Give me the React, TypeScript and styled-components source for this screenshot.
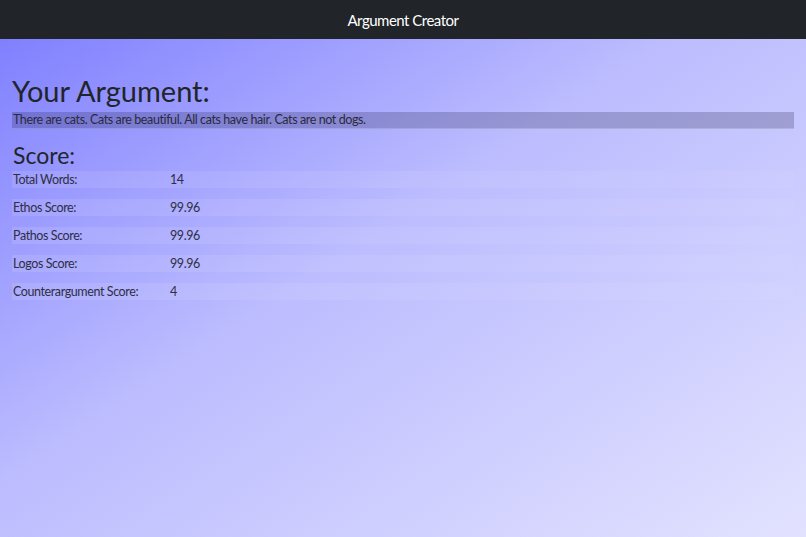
import React from 'react';
import styled, {createGlobalStyle} from 'styled-components';

const GlobalStyle = createGlobalStyle`
  html, body {
    margin: 0;
    padding: 0;
    height: 100%;
  }
  body {
    font-family: Lato, "Noto Sans", sans-serif;
    color: #212529;
  }
  #root {
    min-height: 100%;
  }
`

interface ScoreItem {
  label: string,
  value: string
}

const scores: ScoreItem[] = [
  {label: "Total Words:", value: "14"},
  {label: "Ethos Score:", value: "99.96"},
  {label: "Pathos Score:", value: "99.96"},
  {label: "Logos Score:", value: "99.96"},
  {label: "Counterargument Score:", value: "4"},
]

export default function App() {
  return (
    <Page>
      <GlobalStyle/>
      <NavBar>
        <Brand>Argument Creator</Brand>
      </NavBar>
      <Content>
        <Title>Your Argument:</Title>
        <ArgumentText>
          There are cats. Cats are beautiful. All cats have hair. Cats are not dogs.
        </ArgumentText>
        <SubTitle>Score:</SubTitle>
        <ScoreList>
          {scores.map((s) => (
            <ScoreRow key={s.label}>
              <Label>{s.label}</Label>
              <Value>{s.value}</Value>
            </ScoreRow>
          ))}
        </ScoreList>
      </Content>
    </Page>
  );
}

const Page = styled.div`
  display: flex;
  flex-direction: column;
  min-height: 100vh;
  background: linear-gradient(to bottom right, #7b7bff 0%, #bcbcff 45%, #e2e2ff 100%);
`

const NavBar = styled.nav`
  display: flex;
  justify-content: center;
  align-items: center;
  height: 39px;
  background-color: #212529;
`

const Brand = styled.span`
  color: #ffffff;
  font-size: 15px;
  letter-spacing: -0.5px;
`

const Content = styled.main`
  display: flex;
  flex-direction: column;
  padding: 35px 12px 0 12px;
`

const Title = styled.h1`
  margin: 0 0 3px 0;
  font-size: 29px;
  font-weight: 400;
  line-height: 1.2;
`

const ArgumentText = styled.div`
  font-size: 12.5px;
  letter-spacing: -0.4px;
  line-height: 16px;
  padding: 0 1px;
  color: #2a2a40;
  background-color: rgba(40, 40, 80, 0.25);
  border-bottom: 1px solid rgba(255, 255, 255, 0.2);
`

const SubTitle = styled.h2`
  margin: 13px 0 2px 1px;
  font-size: 23px;
  font-weight: 400;
  line-height: 1.2;
`

const ScoreList = styled.div`
  display: flex;
  flex-direction: column;
  gap: 11px;
`

const ScoreRow = styled.div`
  display: grid;
  grid-template-columns: 158px 1fr;
  height: 17px;
  align-items: center;
  font-size: 12.5px;
  letter-spacing: -0.4px;
  color: #2e2e44;
  background: linear-gradient(90deg, rgba(255, 255, 255, 0.1), rgba(255, 255, 255, 0.03));
`

const Label = styled.span`
  padding-left: 1px;
`

const Value = styled.span``
